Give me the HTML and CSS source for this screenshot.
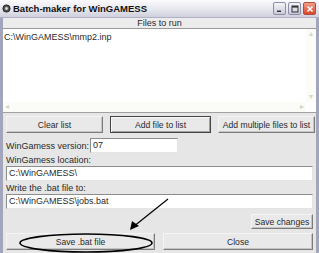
FILE: index.html
```html
<!DOCTYPE html>
<html lang="en">
<head>
    <meta charset="UTF-8">
    <title>Batch-maker for WinGAMESS</title>
    <link rel="stylesheet" href="styles.css">
</head>
<body>
    <div class="window">
        <div class="titlebar">
            <svg class="app-icon" width="9" height="9" viewBox="0 0 9 9">
                <circle cx="4.5" cy="4.5" r="3.6" fill="#555" stroke="#222" stroke-width="1"/>
                <circle cx="4.5" cy="4.5" r="1.4" fill="#ddd"/>
            </svg>
            <span class="title">Batch-maker for WinGAMESS</span>
            <div class="controls">
                <span class="ctl"><svg width="10" height="10" viewBox="0 0 10 10"><rect x="2" y="6.5" width="4" height="1.5" fill="#333"/></svg></span>
                <span class="ctl"><svg width="10" height="10" viewBox="0 0 10 10"><rect x="2" y="2" width="6" height="6" fill="none" stroke="#333" stroke-width="1"/><rect x="2" y="2" width="6" height="1.6" fill="#333"/></svg></span>
                <span class="ctl close"><svg width="10" height="10" viewBox="0 0 10 10"><path d="M2.5 2.5 L7.5 7.5 M7.5 2.5 L2.5 7.5" stroke="#fff" stroke-width="1.6"/></svg></span>
            </div>
        </div>

        <div class="client">
            <div class="list-head">Files to run</div>
            <div class="list">
                <div class="list-items">
                    <div class="item">C:\WinGAMESS\mmp2.inp</div>
                </div>
                <div class="vscroll"><span class="arrow">&#9652;</span><span class="arrow">&#9662;</span></div>
                <div class="hscroll"><span class="arrow">&#9666;</span><span class="arrow">&#9656;</span></div>
            </div>

            <div class="btn-row">
                <button class="btn">Clear list</button>
                <button class="btn focused">Add file to list</button>
                <button class="btn">Add multiple files to list</button>
            </div>

            <div class="version-row">
                <span class="label">WinGamess version:</span>
                <div class="field short">07</div>
            </div>

            <div class="label">WinGamess location:</div>
            <div class="field">C:\WinGAMESS\</div>

            <div class="label">Write the .bat file to:</div>
            <div class="field">C:\WinGAMESS\jobs.bat</div>

            <div class="save-row">
                <button class="btn save-changes">Save changes</button>
            </div>

            <div class="bottom-row">
                <button class="btn">Save .bat file</button>
                <button class="btn">Close</button>
            </div>
        </div>

        <!-- hand drawn annotation over the dialog -->
        <svg class="annot" width="319" height="253" viewBox="0 0 319 253">
            <ellipse cx="86" cy="243" rx="66" ry="9" fill="none" stroke="#000" stroke-width="1.6"/>
            <line x1="168" y1="199" x2="133" y2="227" stroke="#000" stroke-width="1.3"/>
            <path d="M130 230 L132 221 L139 226 Z" fill="#000"/>
        </svg>
    </div>
</body>
</html>
```

FILE: styles.css
```css
body {
    margin: 0;
    width: 319px;
    height: 253px;
    overflow: hidden;
    font-family: "Liberation Sans", Arial, sans-serif;
    font-size: 9px;
    color: #2a2a2a;
}
.window {
    position: relative;
    width: 319px;
    height: 253px;
    box-sizing: border-box;
    border-left: 3px solid #a3a5bd;
    border-right: 3px solid #a3a5bd;
    background: #e6e6e6;
    display: flex;
    flex-direction: column;
}
.titlebar {
    height: 18px;
    margin: 0 -3px;
    padding: 0 3px 0 2px;
    display: flex;
    align-items: center;
    background: linear-gradient(#fbfbfd, #e4e4ec 60%, #cfd0dc);
    border-bottom: 1px solid #b0b1c4;
    box-sizing: border-box;
}
.app-icon {
    margin-right: 2px;
}
.title {
    font-weight: bold;
    font-size: 9.5px;
    color: #111;
    flex: 1;
}
.controls {
    display: flex;
    gap: 2px;
}
.ctl {
    width: 11px;
    height: 11px;
    border: 1px solid #8d8ea6;
    border-radius: 2px;
    background: linear-gradient(#f4f4f8, #c9cada);
    display: flex;
    align-items: center;
    justify-content: center;
}
.ctl.close {
    background: linear-gradient(#f0a08a, #d8452c);
    border-color: #b0503c;
}
.client {
    flex: 1;
    display: flex;
    flex-direction: column;
}
.list-head {
    height: 10px;
    line-height: 10px;
    text-align: center;
    background: #ececec;
    border-bottom: 1px solid #9a9a9a;
}
.list {
    position: relative;
    height: 83px;
    background: #fff;
    border-bottom: 1px solid #a0a0a0;
}
.list-items {
    padding: 3px 1px;
}
.item {
    line-height: 10px;
}
.vscroll {
    position: absolute;
    right: 0;
    top: 0;
    bottom: 10px;
    width: 10px;
    background: #fbfbf8;
    display: flex;
    flex-direction: column;
    justify-content: space-between;
    align-items: center;
}
.hscroll {
    position: absolute;
    left: 0;
    right: 10px;
    bottom: 0;
    height: 10px;
    background: #fbfbf8;
    display: flex;
    justify-content: space-between;
    align-items: center;
    padding: 0 2px;
    box-sizing: border-box;
}
.arrow {
    color: #d4d8c4;
    font-size: 8px;
    line-height: 10px;
}
.btn {
    font-family: "Liberation Sans", Arial, sans-serif;
    font-size: 8.6px;
    color: #2a2a2a;
    background: #e9e9e9;
    border: 1px solid #7c7c7c;
    border-top-color: #f4f4f4;
    border-left-color: #f4f4f4;
    box-shadow: inset -1px -1px 0 #c4c4c4;
    padding: 0;
    margin: 0;
    height: 17px;
    white-space: nowrap;
}
.btn.focused {
    border: 1px solid #444;
    box-shadow: inset 1px 1px 0 #fafafa, inset -1px -1px 0 #a0a0a0;
}
.btn-row {
    display: grid;
    grid-template-columns: 97px 101px 97px;
    gap: 0 7px;
    padding: 3px 3px 0 3px;
}
.version-row {
    display: flex;
    align-items: center;
    padding: 5px 3px 0 3px;
    height: 15px;
}
.version-row .label {
    width: 84px;
    padding: 0;
}
.label {
    padding: 2px 3px 1px 3px;
    line-height: 10px;
}
.field {
    height: 15px;
    box-sizing: border-box;
    margin: 0 3px;
    padding: 0 2px;
    background: #fff;
    border: 1px solid #8c8c8c;
    border-right-color: #e4e4e4;
    border-bottom-color: #e4e4e4;
    line-height: 13px;
    font-size: 9px;
}
.field.short {
    width: 88px;
    margin: 0;
}
.save-row {
    display: flex;
    justify-content: flex-end;
    padding: 5px 3px 0 3px;
}
.save-changes {
    width: 62px;
    height: 15px;
}
.bottom-row {
    display: grid;
    grid-template-columns: 149px 150px;
    gap: 0 8px;
    padding: 4px 3px 0 3px;
}
.annot {
    position: absolute;
    left: -3px;
    top: 0;
    pointer-events: none;
}
```
